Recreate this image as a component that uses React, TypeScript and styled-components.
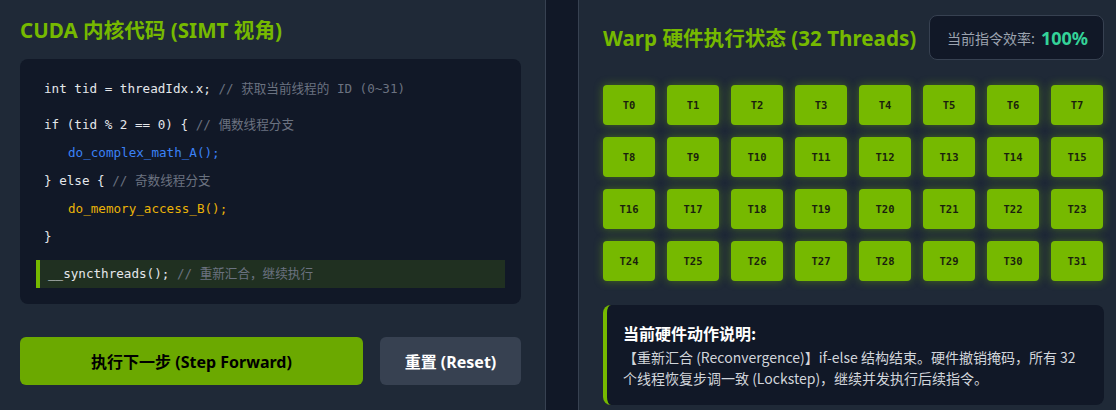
import React from 'react';
import styled, { createGlobalStyle } from 'styled-components';

const GREEN = '#76b900';
const LATIN = '"Noto Sans", "Noto Sans CJK SC", sans-serif';

const GlobalStyle = createGlobalStyle`
    html, body {
        margin: 0;
        padding: 0;
        background: #111827;
        overflow: hidden;
    }
    body {
        font-family: "Noto Sans CJK SC", "Noto Sans", sans-serif;
        color: #e5e7eb;
    }
`;

const Page = styled.div`
    display: flex;
    gap: 32px;
    width: 1160px;
    height: 410px;
    overflow: hidden;
`;

const Panel = styled.section<{ side: 'left' | 'right' }>`
    box-sizing: border-box;
    background: #1f2937;
    display: flex;
    flex-direction: column;
    height: 410px;
    ${props =>
        props.side === 'left'
            ? `width: 546px; padding: 18px 24px 0 20px; border-right: 1px solid #374151;`
            : `width: 550px; padding: 15px 24px 0 24px; border-left: 1px solid #374151;`}
`;

const Title = styled.h2`
    margin: 0;
    font-family: ${LATIN};
    font-size: 20.6px;
    line-height: 24px;
    font-weight: 700;
    color: ${GREEN};
    white-space: nowrap;
`;

const CodeBox = styled.div`
    margin-top: 17px;
    background: #111827;
    border-radius: 8px;
    padding: 16px;
    font-family: "DejaVu Sans Mono", "Noto Sans CJK SC", monospace;
    font-size: 12.6px;
`;

const CodeLine = styled.div<{ indent?: boolean; gapBelow?: boolean; active?: boolean }>`
    height: 28px;
    line-height: 28px;
    white-space: pre;
    color: #e5e7eb;
    padding-left: ${props => (props.indent ? '32px' : '8px')};
    margin-bottom: ${props => (props.gapBelow ? '8px' : '0')};
    ${props =>
        props.active &&
        `
        margin-top: 9px;
        padding-left: 8px;
        border-left: 4px solid ${GREEN};
        background: rgba(118, 185, 0, 0.15);
    `}
`;

const Comment = styled.span`
    color: #6b7280;
`;

const Call = styled.span<{ tone: 'blue' | 'yellow' }>`
    color: ${props => (props.tone === 'blue' ? '#3b82f6' : '#eab308')};
`;

const Actions = styled.div`
    display: flex;
    gap: 17px;
    margin-top: 33px;
`;

const Button = styled.button<{ primary?: boolean }>`
    height: 48px;
    border: none;
    border-radius: 6px;
    font-family: ${LATIN};
    font-size: 16px;
    font-weight: 700;
    cursor: pointer;
    ${props =>
        props.primary
            ? `flex: 1; background: #6ba900; color: #000;`
            : `width: 141px; background: #374151; color: #fff;`}
`;

const Header = styled.div`
    display: flex;
    align-items: center;
    justify-content: space-between;
    height: 45px;
    margin-bottom: 25px;
`;

const Badge = styled.div`
    box-sizing: border-box;
    height: 45px;
    display: flex;
    align-items: center;
    gap: 6px;
    padding: 0 15px 0 17px;
    background: #111827;
    border: 1px solid #374151;
    border-radius: 8px;
    font-size: 14px;
    color: #9ca3af;
`;

const Rate = styled.span`
    font-family: ${LATIN};
    font-size: 18px;
    font-weight: 700;
    color: #34d399;
`;

const ThreadGrid = styled.div`
    display: grid;
    grid-template-columns: repeat(8, 52px);
    grid-auto-rows: 40px;
    gap: 12px;
`;

const Thread = styled.div<{ active: boolean }>`
    display: flex;
    align-items: center;
    justify-content: center;
    border-radius: 4px;
    font-family: "DejaVu Sans Mono", monospace;
    font-size: 10.5px;
    font-weight: 700;
    color: #1a1f0e;
    background: ${props => (props.active ? GREEN : '#374151')};
    box-shadow: ${props => (props.active ? '0 0 10px rgba(118, 185, 0, 0.45)' : 'none')};
`;

const InfoBox = styled.div`
    margin-top: 24px;
    background: #111827;
    border-left: 4px solid ${GREEN};
    border-radius: 8px;
    padding: 16px;
`;

const InfoTitle = styled.div`
    font-size: 16px;
    line-height: 24px;
    font-weight: 700;
    color: #fff;
    margin-bottom: 2px;
`;

const InfoText = styled.div`
    font-size: 14px;
    line-height: 21px;
    color: #d1d5db;
`;

const threads = Array.from({ length: 32 }, (_, i) => i);

export default function App() {
    return (
        <>
            <GlobalStyle />
            <Page>
                <Panel side="left">
                    <Title>CUDA 内核代码 (SIMT 视角)</Title>
                    <CodeBox>
                        <CodeLine gapBelow>
                            int tid = threadIdx.x; <Comment>// 获取当前线程的 ID (0~31)</Comment>
                        </CodeLine>
                        <CodeLine>
                            if (tid % 2 == 0) {'{'} <Comment>// 偶数线程分支</Comment>
                        </CodeLine>
                        <CodeLine indent>
                            <Call tone="blue">do_complex_math_A();</Call>
                        </CodeLine>
                        <CodeLine>
                            {'}'} else {'{'} <Comment>// 奇数线程分支</Comment>
                        </CodeLine>
                        <CodeLine indent>
                            <Call tone="yellow">do_memory_access_B();</Call>
                        </CodeLine>
                        <CodeLine>{'}'}</CodeLine>
                        <CodeLine active>
                            __syncthreads(); <Comment>// 重新汇合，继续执行</Comment>
                        </CodeLine>
                    </CodeBox>
                    <Actions>
                        <Button primary>执行下一步 (Step Forward)</Button>
                        <Button>重置 (Reset)</Button>
                    </Actions>
                </Panel>
                <Panel side="right">
                    <Header>
                        <Title>Warp 硬件执行状态 (32 Threads)</Title>
                        <Badge>
                            当前指令效率: <Rate>100%</Rate>
                        </Badge>
                    </Header>
                    <ThreadGrid>
                        {threads.map(t => (
                            <Thread key={t} active>
                                T{t}
                            </Thread>
                        ))}
                    </ThreadGrid>
                    <InfoBox>
                        <InfoTitle>当前硬件动作说明:</InfoTitle>
                        <InfoText>
                            【重新汇合 (Reconvergence)】if-else 结构结束。硬件撤销掩码，所有 32
                            个线程恢复步调一致 (Lockstep)，继续并发执行后续指令。
                        </InfoText>
                    </InfoBox>
                </Panel>
            </Page>
        </>
    );
}
